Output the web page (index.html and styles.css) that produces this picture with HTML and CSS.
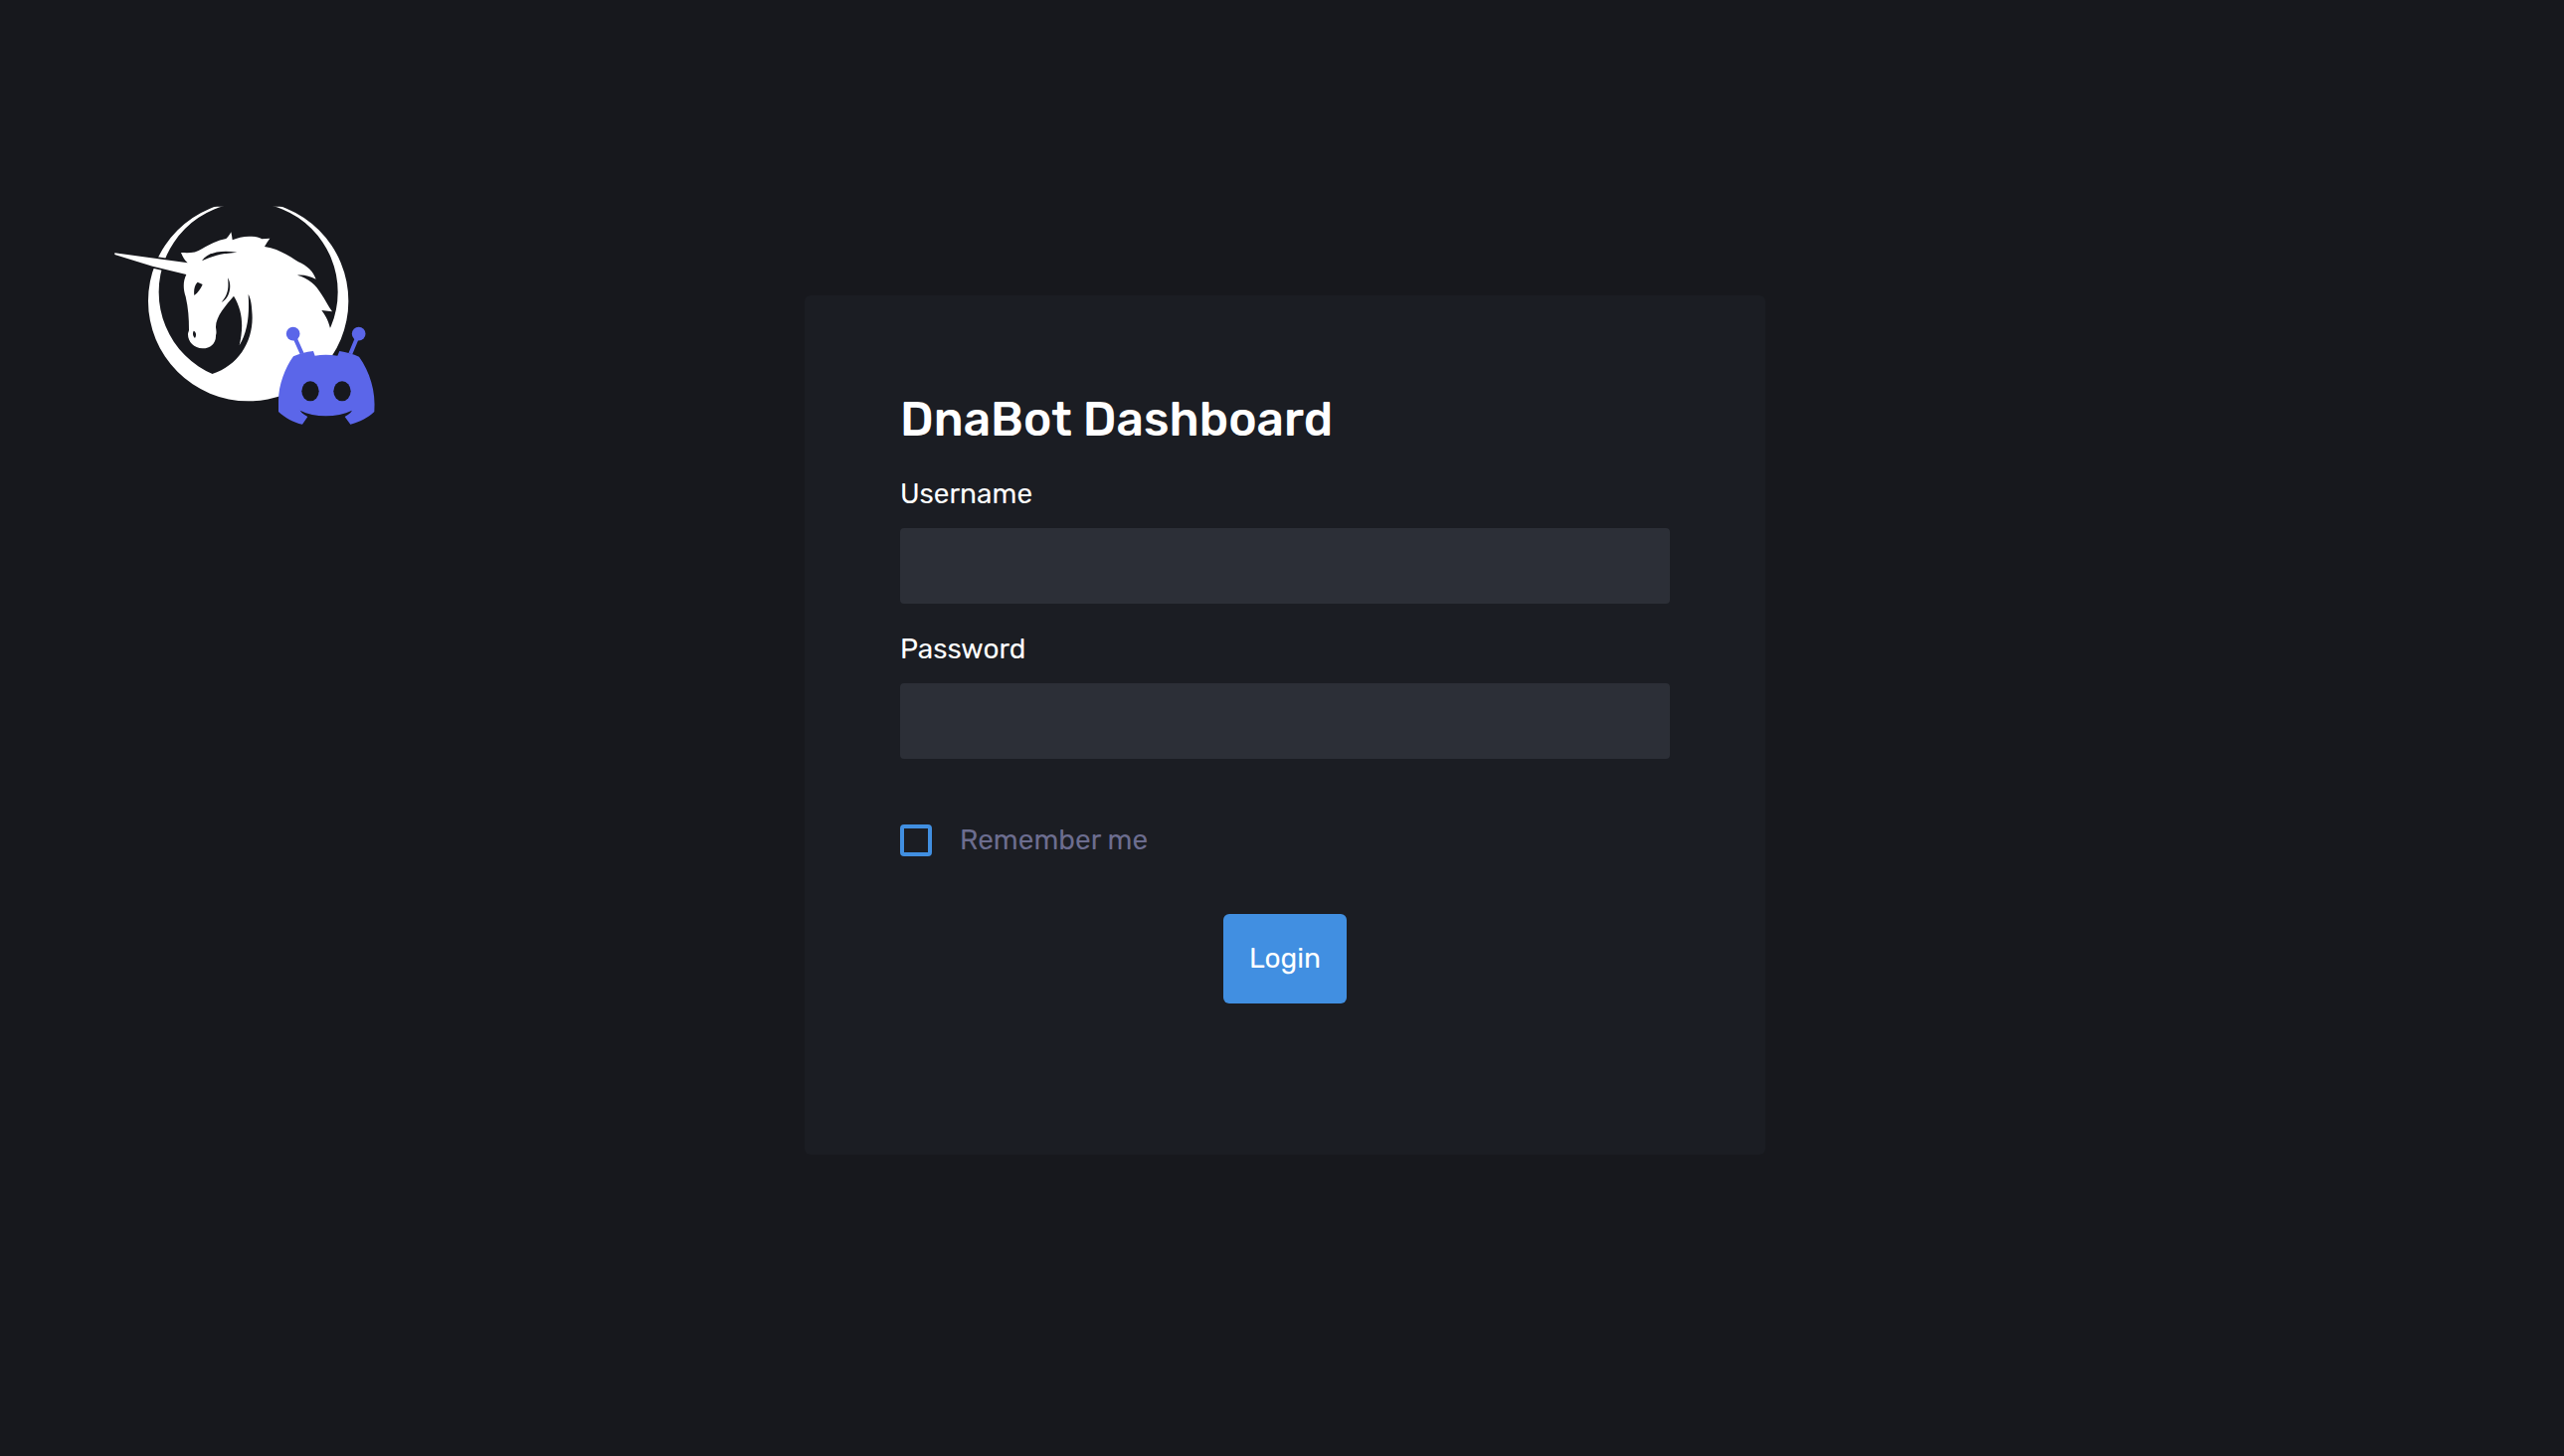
FILE: index.html
```html
<!DOCTYPE html>
<html lang="en">
<head>
<meta charset="utf-8">
<title>DnaBot Dashboard</title>
<link rel="stylesheet" href="styles.css">
</head>
<body>
<main class="page">
  <svg class="logo" viewBox="0 0 900 750" role="img" aria-label="DnaBot">
    <defs><clipPath id="crest"><rect x="0" y="53" width="900" height="697"/></clipPath></defs>
    <path class="light" clip-path="url(#crest)" fill-rule="evenodd" d="M147 338A302 302 0 0 1 751 338A302 302 0 0 1 147 338ZM179 311A270 270 0 0 0 719 311A270 270 0 0 0 179 311Z"/>
    <path class="gap" d="M100 201L240 221L240 250L160 232L100 215Z"/>
    <path class="light" d="M46 193L150 207L266 223C257 215 251 205 246 192C270 193 290 194 310 180C330 168 358 154 382 150C390 143 393 137 397 130C399 138 400 146 401 154C425 142 465 138 490 151L514 149C508 157 503 165 498 174C540 180 572 202 600 220C627 231 645 250 653 272C635 265 620 258 597 260C630 268 655 292 668 315C680 333 690 353 702 370L670 366C680 380 690 395 696 420L690 500L600 590L449 610L340 575V558C425 530 468 450 460 370C459 345 455 328 449 318C453 380 447 430 422 472C434 420 434 370 405 323C382 350 350 385 351 418C352 426 354 432 351 442C352 465 335 481 311 481C285 480 266 460 267 437C267 432 270 430 270 425C270 390 268 360 260 325C252 300 252 278 262 258L160 233Q100 215 46 198Z"/>
    <path class="dark" d="M309 217C325 190 370 183 415 191C375 194 340 201 309 217ZM387 268C401 290 393 330 368 342C387 320 391 300 387 268ZM296 281L311 288C305 302 298 312 286 321C284 306 286 291 296 281ZM284 428C291 431 294 440 288 450C282 445 280 436 284 428Z"/>
    <g class="bot">
      <path class="antenna" d="M584 437L611 497M782 437L757 497"/>
      <circle cx="584" cy="437" r="20.5"/><circle cx="782" cy="437" r="20.5"/>
      <path d="M585 505C560 540 540 590 540 640V672C560 690 585 705 612 710L628 687C620 682 612 678 605 668C650 690 715 690 762 668C756 678 748 682 740 687L757 710C785 703 810 690 829 672C834 610 815 550 783 506C765 498 745 493 724 489L718 503C695 499 670 499 650 503L645 489C622 491 603 497 585 505Z"/>
    </g>
    <ellipse class="dark" cx="636" cy="610" rx="26" ry="30"/><ellipse class="dark" cx="732" cy="610" rx="26" ry="30"/>
  </svg>
  <form class="card">
    <h1 class="title">DnaBot Dashboard</h1>
    <label class="label" for="user">Username</label>
    <input class="field" id="user" type="text">
    <label class="label" for="pass">Password</label>
    <input class="field" id="pass" type="password">
    <label class="remember"><input class="check" type="checkbox"><span>Remember me</span></label>
    <button class="login" type="button">Login</button>
  </form>
</main>
</body>
</html>
```
FILE: styles.css
```css
* { box-sizing: border-box; }
body {
  margin: 0;
  background: #17181d;
  color: #fff;
  font: 400 28px/36px Rubik, Roboto, sans-serif;
}
.page {
  display: grid;
  grid-template-columns: 809px 966px 1fr;
  align-items: start;
  min-height: 1464px;
}
.logo { width: 300px; height: 250px; margin: 190px 0 0 100px; }
.light { fill: #fff; }
.dark { fill: #17181d; }
.gap { fill: #17181d; stroke: #17181d; stroke-width: 14; }
.bot { fill: #5b66e9; }
.antenna { stroke: #5b66e9; stroke-width: 12; }
.card {
  display: flex;
  flex-direction: column;
  height: 864px;
  margin-top: 297px;
  padding: 95px 96px;
  border-radius: 6px;
  background: #1b1d23;
}
.title {
  margin: 0 0 27px;
  font-size: 48px;
  font-weight: 500;
  line-height: 60px;
}
.label { height: 36px; margin-bottom: 16px; }
.field {
  flex: none;
  width: 100%;
  height: 76px;
  margin: 0 0 28px;
  padding: 0 24px;
  border: 0;
  border-radius: 4px;
  background: #2c2f37;
  color: #fff;
  font: inherit;
}
.remember {
  display: flex;
  align-items: center;
  gap: 28px;
  height: 36px;
  margin: 36px 0 56px;
  color: #6c6d8f;
}
.check {
  appearance: none;
  width: 32px;
  height: 32px;
  margin: 0;
  border: 4px solid #418fe1;
  border-radius: 4px;
}
.login {
  align-self: center;
  width: 124px;
  height: 90px;
  padding: 0;
  border: 0;
  border-radius: 6px;
  background: #418fe1;
  color: #fff;
  font: inherit;
}
```
